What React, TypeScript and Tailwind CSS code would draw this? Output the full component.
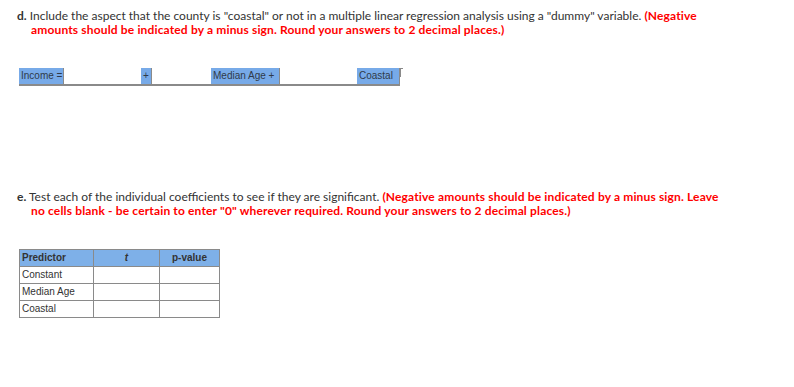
import React from 'react';

const body = { fontFamily: 'Lato, "Open Sans", sans-serif' };
const arial = { fontFamily: '"Liberation Sans", Arial, sans-serif' };

function Label({ w, children }: { w: string; children: React.ReactNode }) {
  return (
    <div className={`h-4 pl-[2px] bg-[#77aae8] border-r border-[#8a8a8a] text-[10px] leading-4 text-[#2f3a4a] whitespace-nowrap ${w}`}>
      {children}
    </div>
  );
}

const rows = ['Constant', 'Median Age', 'Coastal'];

export default function App() {
  return (
    <div className="w-[794px] h-[387px] bg-white text-[#333] relative" style={body}>
      <div className="pl-[17px] pt-[9px] pr-4">
        <p className="text-[12px] leading-[14px] pl-[14px] -indent-[14px] whitespace-nowrap">
          <span className="font-bold">d.</span> Include the aspect that the county is "coastal" or not in a
          multiple linear regression analysis using a "dummy" variable.{' '}
          <span className="font-bold text-[#ff0000] tracking-[0.15px]">
            (Negative
            <br />
            amounts should be indicated by a minus sign. Round your answers to 2 decimal places.)
          </span>
        </p>

        <div className="mt-[31px] ml-[2px] flex items-start" style={arial}>
          <div className="flex border-b-2 border-[#8a8a8a]">
            <Label w="w-[45px]">Income =</Label>
            <div className="w-[77px] h-4" />
            <Label w="w-[11px]">+</Label>
            <div className="w-[59px] h-4" />
            <Label w="w-[69px]">Median Age +</Label>
            <div className="w-[77px] h-4" />
            <Label w="w-[43px]">Coastal</Label>
          </div>
          <div className="w-[3px] h-[9px] border-t border-l border-[#8a8a8a]" />
        </div>

        <p className="mt-[104px] text-[12px] leading-[14px] pl-[14px] -indent-[14px] whitespace-nowrap">
          <span className="font-bold">e.</span> Test each of the individual coefficients to see if they are
          significant.{' '}
          <span className="font-bold text-[#ff0000] tracking-[0.15px]">
            (Negative amounts should be indicated by a minus sign. Leave
            <br />
            no cells blank - be certain to enter "0" wherever required. Round your answers to 2 decimal places.)
          </span>
        </p>

        <table className="mt-[31px] ml-[2px] border-collapse text-[10px] text-[#333]" style={arial}>
          <thead>
            <tr className="bg-[#7eb0e8] h-4">
              <th className="w-[74px] border border-[#8a8a8a] text-left font-bold px-[2px] leading-4">Predictor</th>
              <th className="w-[66px] border border-[#8a8a8a] text-center font-bold italic leading-4">t</th>
              <th className="w-[60px] border border-[#8a8a8a] text-center font-bold leading-4">p-value</th>
            </tr>
          </thead>
          <tbody>
            {rows.map(r => (
              <tr key={r} className="h-[17px]">
                <td className="border border-[#8a8a8a] px-[2px] leading-4">{r}</td>
                <td className="border border-[#8a8a8a]" />
                <td className="border border-[#8a8a8a]" />
              </tr>
            ))}
          </tbody>
        </table>
      </div>
    </div>
  );
}
